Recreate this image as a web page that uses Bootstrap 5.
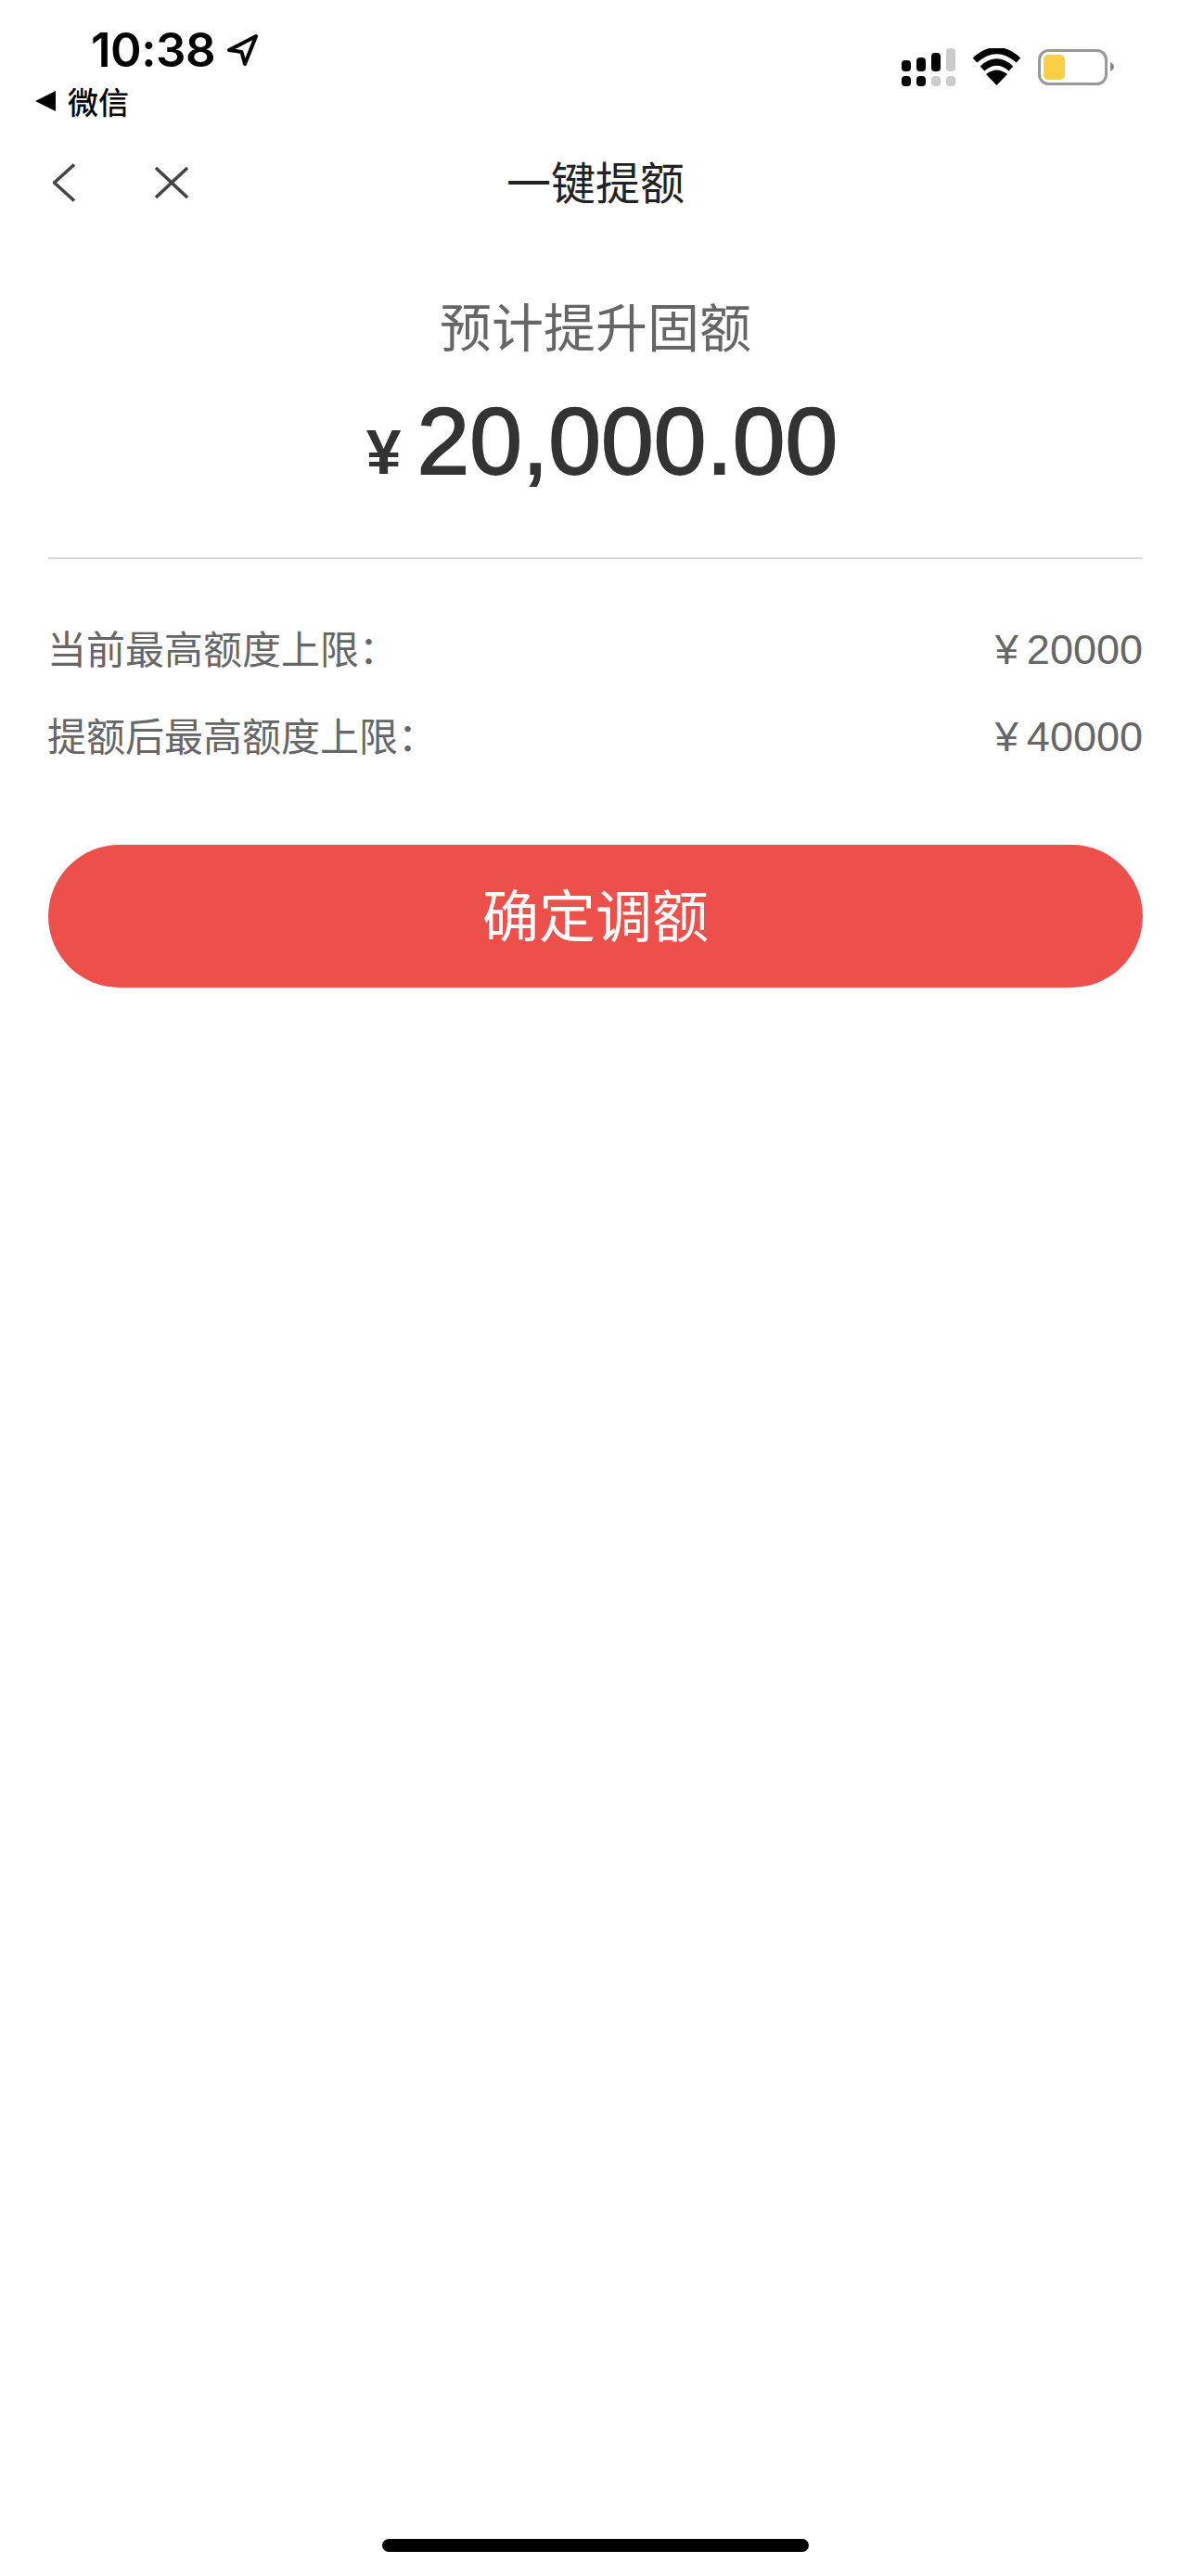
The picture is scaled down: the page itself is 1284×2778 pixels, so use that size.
<!DOCTYPE html>
<html lang="zh-CN">
<head>
<meta charset="utf-8">
<title>一键提额</title>
<link href="https://cdn.jsdelivr.net/npm/bootstrap@5.3.0/dist/css/bootstrap.min.css" rel="stylesheet">
<style>
html,body{height:100%}
body{background:#fff;font-family:"Liberation Sans","Noto Sans CJK SC",sans-serif;color:#333}
.screen{min-height:2778px}
.status{height:146px}
.st-left{padding-top:23px;padding-left:38px}
.clock{font-family:Inter,sans-serif;font-weight:600;font-size:51px;line-height:62px;margin-left:60px;letter-spacing:-.5px;color:#000}
.back-app{font-family:"Noto Sans CJK SC",sans-serif;font-weight:500;font-size:33px;line-height:44px;margin-top:2px;color:#000;gap:13px}
.st-right{padding-top:52px;padding-right:82px}
.topnav{display:grid;grid-template-columns:1fr auto 1fr;height:102px;padding:0 57px}
.nav-title{font-family:"Noto Sans CJK SC",sans-serif;font-size:48px;line-height:96px;height:102px;color:#222}
.nav-btns{gap:86px}
.hero{padding-top:63px;padding-left:14px}
.hero-sub{font-family:"Noto Sans CJK SC",sans-serif;font-size:56px;line-height:78px;color:#666;margin-left:-14px}
.hero-amt{height:115px;margin-top:30px;line-height:115px;color:#333}
.yen-big{font-size:68px;font-weight:700;margin-right:17px}
.digits{font-size:102px;-webkit-text-stroke:1.8px #333}
.rule{margin:67px 52px 0;border-top:2px solid #d8d8d8;opacity:1}
.info{padding:49px 52px 0;font-size:42px;color:#666}
.info-row{height:94px;font-family:"Noto Sans CJK SC",sans-serif}
.info-label{margin-top:-3px;margin-left:-1px}
.info-num{font-family:"Liberation Sans",sans-serif;font-size:45px;margin-top:3px}
.info-num span{margin-right:9px}
.confirm{display:block;width:1180px;height:154px;margin:71px 52px 0;border:0;border-radius:77px;background:#ed504a;color:#fff;font-family:"Noto Sans CJK SC",sans-serif;font-size:61px;line-height:144px;padding:0 0 6px}
.confirm:hover,.confirm:active{background:#ed504a;color:#fff}
.home-bar{width:460px;height:14px;border-radius:7px;background:#000;margin:0 auto 26px}
</style>
</head>
<body>
<div class="screen d-flex flex-column">
  <div class="status d-flex justify-content-between">
    <div class="st-left">
      <div class="clock d-flex align-items-center gap-2">10:38
        <svg width="34" height="36" viewBox="0 0 34 36" class="ms-1"><path d="M3 18 L32 3 L20 33 L16.500 20 Z" fill="none" stroke="#000" stroke-width="4" stroke-linejoin="round"/></svg>
      </div>
      <div class="back-app d-flex align-items-center">
        <svg width="22" height="22" viewBox="0 0 22 22"><path d="M0 11 L22 0 V22 Z" fill="#000"/></svg>
        <span>微信</span>
      </div>
    </div>
    <div class="st-right">
      <svg width="230" height="42" viewBox="973 52 230 42">
        <g fill="#000">
          <rect x="973" y="65" width="10" height="12" rx="4"/><rect x="989" y="62" width="10" height="15" rx="4"/><rect x="1005" y="57" width="10" height="20" rx="4"/>
          <rect x="973" y="82" width="10" height="11" rx="4"/><rect x="989" y="82" width="10" height="11" rx="4"/>
        </g>
        <g fill="#ccc">
          <rect x="1021" y="52" width="10" height="25" rx="4"/><rect x="1005" y="82" width="10" height="11" rx="4"/><rect x="1021" y="82" width="10" height="11" rx="4"/>
        </g>
        <path d="M1075.500 92 L1064 80 Q1075.500 71 1087 80 Z" fill="#000"/>
        <path d="M1060 74 Q1075.500 60 1091 74" fill="none" stroke="#000" stroke-width="7"/>
        <path d="M1052 65 Q1075.500 44 1099 65" fill="none" stroke="#000" stroke-width="7"/>
        <rect x="1121.500" y="54.500" width="72" height="36" rx="10" fill="#fff" stroke="#999" stroke-width="3"/>
        <rect x="1126" y="59" width="23" height="27" rx="5" fill="#f8cf45"/>
        <path d="M1198 67 Q1202 69 1202 72 Q1202 75 1198 77 Z" fill="#888"/>
      </svg>
    </div>
  </div>
  <nav class="topnav align-items-center">
    <div class="nav-btns d-flex align-items-center">
      <svg width="24" height="42" viewBox="0 0 24 42"><path d="M23 1.500 L1.500 21 L23 40.500" fill="none" stroke="#444" stroke-width="3.500"/></svg>
      <svg width="36" height="34" viewBox="0 0 36 34"><path d="M1 1 L35 33 M35 1 L1 33" fill="none" stroke="#444" stroke-width="3.500"/></svg>
    </div>
    <div class="nav-title">一键提额</div>
    <div></div>
  </nav>
  <section class="hero text-center">
    <div class="hero-sub">预计提升固额</div>
    <div class="hero-amt"><span class="yen-big">¥</span><span class="digits">20,000.00</span></div>
  </section>
  <hr class="rule">
  <div class="info">
    <div class="info-row d-flex justify-content-between align-items-center"><span class="info-label">当前最高额度上限：</span><span class="info-num"><span>¥</span>20000</span></div>
    <div class="info-row d-flex justify-content-between align-items-center"><span class="info-label">提额后最高额度上限：</span><span class="info-num"><span>¥</span>40000</span></div>
  </div>
  <button type="button" class="btn confirm">确定调额</button>
  <div class="home-bar mt-auto"></div>
</div>
<script src="https://cdn.jsdelivr.net/npm/bootstrap@5.3.0/dist/js/bootstrap.bundle.min.js"></script>
</body>
</html>
